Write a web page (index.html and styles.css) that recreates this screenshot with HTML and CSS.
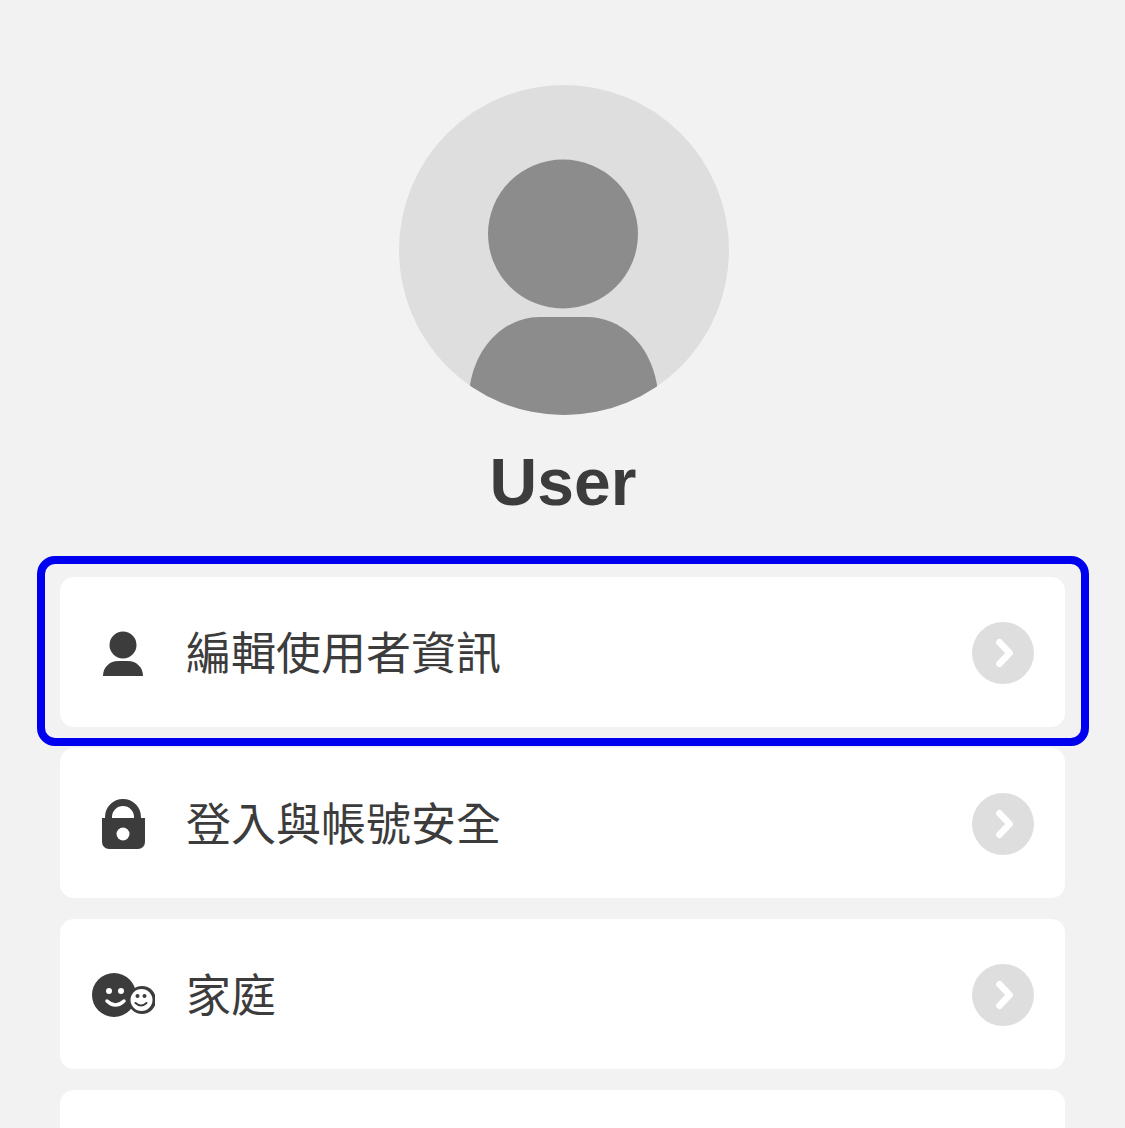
FILE: index.html
```html
<!DOCTYPE html>
<html lang="zh-Hant">
<head>
<meta charset="utf-8">
<title>User</title>
<link rel="stylesheet" href="styles.css">
</head>
<body>
<main class="page">
  <section class="profile">
    <svg class="avatar" viewBox="0 0 330 330" width="330" height="330" aria-hidden="true">
      <ellipse cx="164" cy="149" rx="75" ry="74.5" fill="#8c8c8c"/>
      <path d="M71 300C78 258 108 232 141 232H188C221 232 251 258 258 300V340H71Z" fill="#8c8c8c"/>
    </svg>
    <h1 class="name">User</h1>
  </section>

  <nav class="menu">
    <a class="row row-focused">
      <span class="row-icon">
        <svg viewBox="0 0 64 64" width="64" height="64" aria-hidden="true">
          <circle cx="32" cy="25" r="13.5" fill="#3c3c3c"/>
          <path d="M12 56C12 47 19 41 27 41H37C45 41 52 47 52 56Z" fill="#3c3c3c"/>
        </svg>
      </span>
      <span class="row-label">編輯使用者資訊</span>
      <svg class="chevron" viewBox="0 0 61 61" width="62" height="62" aria-hidden="true">
        <circle cx="30.5" cy="30.5" r="30.5" fill="#dedede"/>
        <path d="M27 20L37 30.5L27 41" fill="none" stroke="#fff" stroke-width="6.5" stroke-linecap="round" stroke-linejoin="round"/>
      </svg>
    </a>

    <a class="row">
      <span class="row-icon">
        <svg viewBox="0 0 64 64" width="64" height="64" aria-hidden="true">
          <path d="M17.5 28V26a14.5 14.5 0 0 1 29 0V28" fill="none" stroke="#3c3c3c" stroke-width="7"/>
          <path d="M11 27H54V51a7 7 0 0 1-7 7H18a7 7 0 0 1-7-7Z" fill="#3c3c3c"/>
          <circle cx="32" cy="43" r="6.5" fill="#fff"/>
        </svg>
      </span>
      <span class="row-label">登入與帳號安全</span>
      <svg class="chevron" viewBox="0 0 61 61" width="62" height="62" aria-hidden="true">
        <circle cx="30.5" cy="30.5" r="30.5" fill="#dedede"/>
        <path d="M27 20L37 30.5L27 41" fill="none" stroke="#fff" stroke-width="6.5" stroke-linecap="round" stroke-linejoin="round"/>
      </svg>
    </a>

    <a class="row">
      <span class="row-icon">
        <svg viewBox="0 0 64 64" width="64" height="64" aria-hidden="true">
          <circle cx="23" cy="33" r="22" fill="#3c3c3c"/>
          <circle cx="18" cy="29" r="3" fill="#fff"/>
          <circle cx="30" cy="29" r="3" fill="#fff"/>
          <path d="M16 39Q24.5 47 33 39" fill="none" stroke="#fff" stroke-width="3.5" stroke-linecap="round"/>
          <circle cx="51" cy="38" r="14" fill="#3c3c3c"/>
          <circle cx="50.5" cy="38" r="11" fill="#fff"/>
          <circle cx="46.5" cy="34" r="2" fill="#3c3c3c"/>
          <circle cx="53.5" cy="34" r="2" fill="#3c3c3c"/>
          <path d="M44.5 41Q50 46 55.5 41" fill="none" stroke="#3c3c3c" stroke-width="2" stroke-linecap="round"/>
        </svg>
      </span>
      <span class="row-label">家庭</span>
      <svg class="chevron" viewBox="0 0 61 61" width="62" height="62" aria-hidden="true">
        <circle cx="30.5" cy="30.5" r="30.5" fill="#dedede"/>
        <path d="M27 20L37 30.5L27 41" fill="none" stroke="#fff" stroke-width="6.5" stroke-linecap="round" stroke-linejoin="round"/>
      </svg>
    </a>

    <a class="row"></a>
  </nav>
</main>
</body>
</html>
```

FILE: styles.css
```css
html, body {
  margin: 0;
  height: 100%;
  overflow: hidden;
  background: #f2f2f2;
}

.page {
  padding: 85px 60px 0;
  color: #3c3c3c;
  font-family: "Liberation Sans", "Noto Sans CJK TC", sans-serif;
}

.profile {
  display: flex;
  flex-direction: column;
  align-items: center;
  padding-left: 3px;
}

.avatar {
  display: block;
  border-radius: 50%;
  background: #dedede;
}

.name {
  margin: 28px 2px 0 0;
  height: 134px;
  font-size: 66px;
  font-weight: 700;
  line-height: 78px;
}

.menu {
  display: flex;
  flex-direction: column;
  gap: 21px;
}

.row {
  position: relative;
  display: flex;
  align-items: center;
  flex: none;
  height: 150px;
  padding-right: 31px;
  border-radius: 14px;
  background: #fff;
}

/* Keyboard focus ring drawn around the active row */
.row-focused::after {
  content: "";
  position: absolute;
  top: -21px;
  right: -24px;
  bottom: -19px;
  left: -23px;
  border: 8px solid #0000f0;
  border-radius: 18px;
  pointer-events: none;
}

.row-icon {
  display: flex;
  justify-content: center;
  flex: none;
  width: 126px;
}

.row-icon svg {
  display: block;
}

.row-label {
  flex: 1;
  padding-bottom: 2px;
  font-family: "Noto Sans CJK TC", sans-serif;
  font-size: 45px;
  line-height: 60px;
}

.chevron {
  display: block;
  flex: none;
  margin-top: 2px;
}
```
